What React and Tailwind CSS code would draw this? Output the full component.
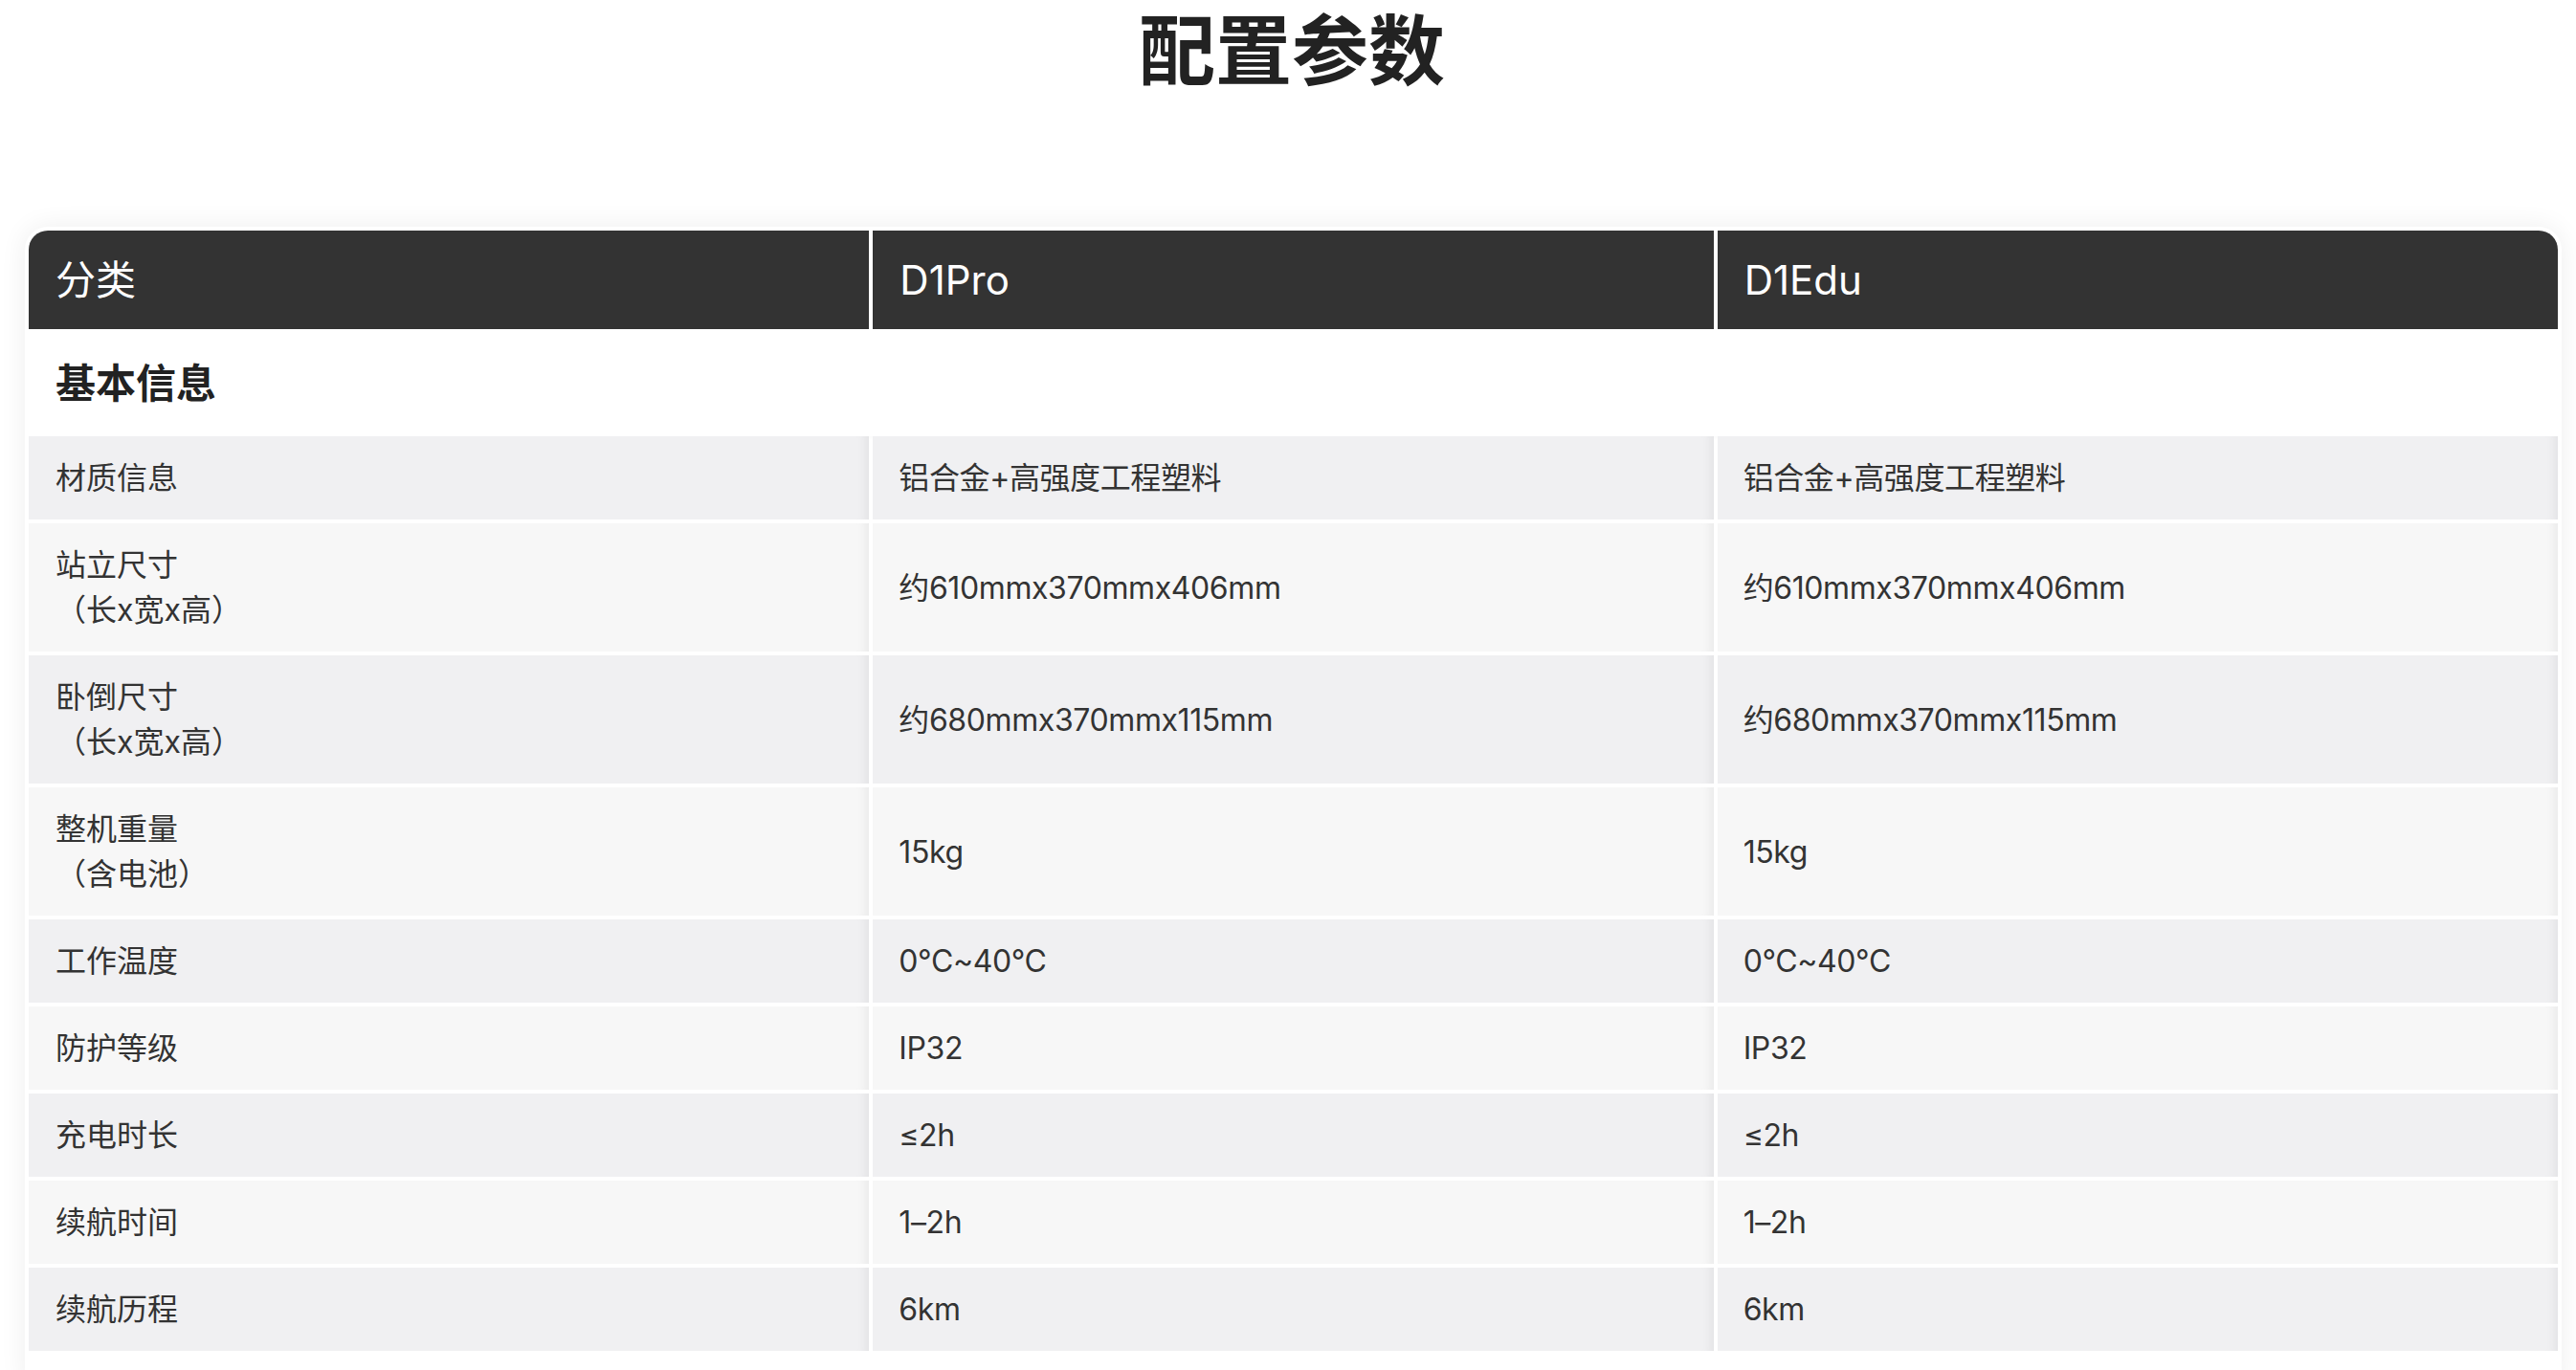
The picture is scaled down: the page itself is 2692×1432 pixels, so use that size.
const columns = ['分类', 'D1Pro', 'D1Edu']

const rows = [
  { label: ['材质信息'], value: '铝合金+高强度工程塑料' },
  { label: ['站立尺寸', '（长x宽x高）'], value: '约610mmx370mmx406mm' },
  { label: ['卧倒尺寸', '（长x宽x高）'], value: '约680mmx370mmx115mm' },
  { label: ['整机重量', '（含电池）'], value: '15kg' },
  { label: ['工作温度'], value: '0°C~40°C' },
  { label: ['防护等级'], value: 'IP32' },
  { label: ['充电时长'], value: '≤2h' },
  { label: ['续航时间'], value: '1–2h' },
  { label: ['续航历程'], value: '6km' },
]

const cellShadow = 'shadow-[inset_-12px_0_12px_-10px_rgba(0,0,0,0.07)]'

export default function App() {
  return (
    <div
      className="min-h-screen w-[2692px] overflow-hidden bg-white text-[#333333]"
      style={{ fontFamily: 'Inter, "Noto Sans CJK SC", sans-serif' }}
    >
      <h1 className="pl-[8px] pt-[5px] text-center text-[80px] font-bold leading-[96px] text-[#222222]">
        配置参数
      </h1>

      <div className="ml-[26px] mt-[136px] w-[2651px] rounded-[24px] bg-white p-[4px] shadow-[0_0_28px_rgba(0,0,0,0.07)]">
        {/* header */}
        <div className="grid grid-cols-3 gap-x-[4px]">
          {columns.map((c, i) => (
            <div
              key={c}
              className={
                'flex h-[103px] items-center bg-[#333333] pl-[28px] text-[42px] font-normal text-white ' +
                (i === 0 ? 'rounded-tl-[20px]' : i === 2 ? 'rounded-tr-[20px]' : '')
              }
            >
              {c}
            </div>
          ))}
        </div>

        {/* section */}
        <div className="flex h-[112px] items-center bg-white pl-[28px] text-[42px] font-bold text-[#222222] shadow-[0_6px_8px_-8px_rgba(0,0,0,0.06)]">
          基本信息
        </div>

        <div className="flex flex-col gap-y-[4px]">
          {rows.map((r, idx) => {
            const bg = idx % 2 === 0 ? 'bg-[#f0f0f2]' : 'bg-[#f7f7f7]'
            return (
              <div key={r.label[0]} className="grid grid-cols-3 gap-x-[4px]">
                <div
                  className={`${bg} ${cellShadow} py-[20px] pl-[28px] text-[32px] leading-[47px]`}
                >
                  {r.label.map((l) => (
                    <div key={l}>{l}</div>
                  ))}
                </div>
                {[0, 1].map((k) => (
                  <div
                    key={k}
                    className={`${bg} ${cellShadow} flex items-center py-[20px] pl-[27px] text-[32px] leading-[47px] tracking-[-0.4px]`}
                  >
                    {r.value}
                  </div>
                ))}
              </div>
            )
          })}
        </div>
        <div className="h-[40px]" />
      </div>
    </div>
  )
}
